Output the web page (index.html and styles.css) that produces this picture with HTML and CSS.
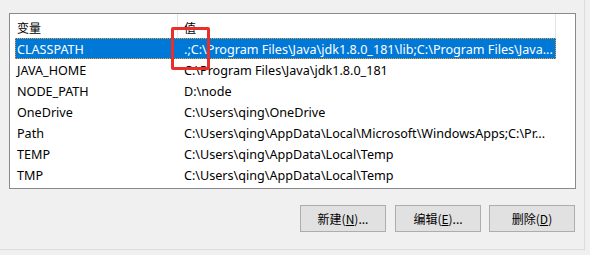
FILE: index.html
```html
<!DOCTYPE html>
<html lang="zh-CN">
<head>
<meta charset="utf-8">
<link rel="stylesheet" href="styles.css">
</head>
<body>
<div class="panel">
  <div class="listbox">
    <div class="table">
      <div class="head">
        <div class="c1 hcell">变量</div>
        <div class="c2 hcell">值</div>
      </div>
      <div class="row selected"><div class="c1">CLASSPATH</div><div class="c2">.;C:\Program Files\Java\jdk1.8.0_181\lib;C:\Program Files\Java...</div></div>
      <div class="row"><div class="c1">JAVA_HOME</div><div class="c2">C:\Program Files\Java\jdk1.8.0_181</div></div>
      <div class="row"><div class="c1">NODE_PATH</div><div class="c2">D:\node</div></div>
      <div class="row"><div class="c1">OneDrive</div><div class="c2">C:\Users\qing\OneDrive</div></div>
      <div class="row"><div class="c1">Path</div><div class="c2">C:\Users\qing\AppData\Local\Microsoft\WindowsApps;C:\Pr...</div></div>
      <div class="row"><div class="c1">TEMP</div><div class="c2">C:\Users\qing\AppData\Local\Temp</div></div>
      <div class="row"><div class="c1">TMP</div><div class="c2">C:\Users\qing\AppData\Local\Temp</div></div>
    </div>
    <div class="highlight"></div>
  </div>
  <div class="buttons">
    <button class="btn">新建(<u>N</u>)...</button>
    <button class="btn">编辑(<u>E</u>)...</button>
    <button class="btn">删除(<u>D</u>)</button>
  </div>
</div>
</body>
</html>
```
FILE: styles.css
```css
html, body {
  margin: 0;
  padding: 0;
  background: #f0f0f0;
}
body {
  width: 590px;
  height: 255px;
  overflow: hidden;
  font-family: "Noto Sans", "Noto Sans CJK SC", sans-serif;
  font-size: 12.6px;
  color: #000;
}
.panel {
  width: 585px;
  height: 250px;
  box-sizing: border-box;
  border-right: 1px solid #dcdcdc;
  border-bottom: 1px solid #dcdcdc;
  padding-top: 13px;
}
.listbox {
  position: relative;
  margin-left: 9px;
  width: 567px;
  height: 176px;
  box-sizing: border-box;
  border: 1px solid #8a8a8a;
  background: #fff;
  padding-left: 5px;
}
.table {
  width: 541px;
}
.head {
  display: flex;
  height: 24px;
  align-items: stretch;
}
.hcell {
  display: flex;
  align-items: center;
  padding-top: 4px;
  box-sizing: border-box;
  font-size: 12px;
}
.head .c1 {
  border-right: 1px solid #e5e5e5;
}
.head .c2 {
  border-right: 1px solid #e5e5e5;
}
.row {
  display: flex;
  height: 21px;
  align-items: center;
  box-sizing: border-box;
  white-space: nowrap;
  padding-top: 1px;
}
.c1 {
  width: 163px;
  padding-left: 2px;
  box-sizing: border-box;
  flex: none;
}
.c2 {
  width: 378px;
  padding-left: 6px;
  box-sizing: border-box;
  flex: none;
  overflow: hidden;
}
.row.selected {
  background: #0078d7;
  color: #fff;
  outline: 1px dotted #f5a020;
  outline-offset: -1px;
}
.highlight {
  position: absolute;
  left: 161px;
  top: 13px;
  width: 39px;
  height: 43px;
  box-sizing: border-box;
  border: 3px solid #e8302a;
  border-radius: 2px;
}
.buttons {
  display: flex;
  justify-content: flex-end;
  gap: 9px;
  margin-top: 16px;
  padding-right: 9px;
}
.btn {
  width: 86px;
  height: 27px;
  background: #e1e1e1;
  border: 1px solid #adadad;
  font-family: "Noto Sans CJK SC", "Noto Sans", sans-serif;
  font-size: 12px;
  color: #000;
  padding: 0;
  margin: 0;
}
.btn:last-child {
  margin-left: -1px;
}
u {
  text-underline-offset: 1px;
}
```
